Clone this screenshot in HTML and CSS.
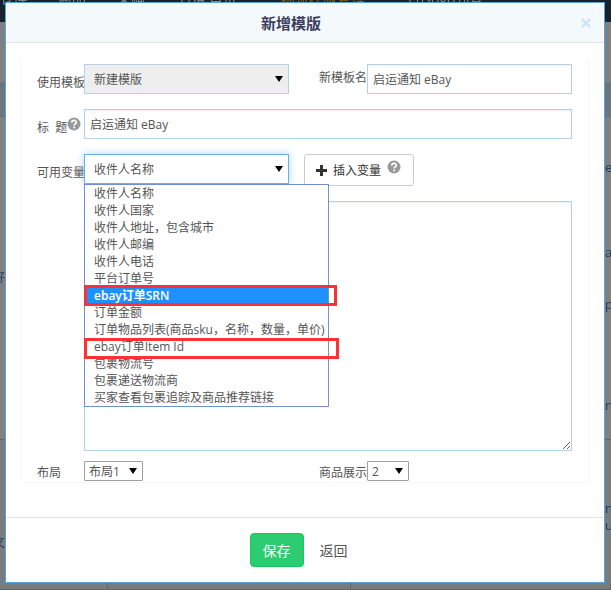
FILE: index.html
```html
<!DOCTYPE html>
<html lang="zh-CN">
<head>
<meta charset="utf-8">
<title>新增模版</title>
<link rel="stylesheet" href="styles.css">
</head>
<body>
<div class="page" aria-hidden="true">
  <nav class="nav"><span>仓库</span><span>商品</span><span>采购</span><span>FBA 自货</span><span class="nav-current">物流模版管理</span><span>Ensogo刊登</span></nav>
  <div class="blank"></div>
  <div class="band"></div>
  <div class="list">
    <span class="side-left">好</span>
    <div class="side-right"><span>e</span><span>at</span><span>p</span><span>n</span></div>
  </div>
  <div class="table-end">
    <span class="side-left">文</span>
    <div class="side-right tight"><span>n</span><span>u</span></div>
    <div class="cells"><i></i><i></i><i></i></div>
  </div>
</div>

<div class="overlay">
  <section class="modal" role="dialog" aria-labelledby="modal-title">
    <header class="modal-header">
      <h1 id="modal-title">新增模版</h1>
      <button class="close" type="button" aria-label="关闭">
        <svg viewBox="0 0 12 12" width="12" height="12"><path d="M2 2 10 10M10 2 2 10" stroke="currentColor" stroke-width="3"/></svg>
      </button>
    </header>
    <form id="template-form" class="modal-body">
      <div class="panel">
        <div class="row">
          <label for="source">使用模板</label>
          <div class="select muted"><select id="source"><option>新建模版</option></select></div>
          <label class="second raised" for="name">新模板名</label>
          <input id="name" type="text" value="启运通知 eBay">
        </div>
        <div class="row">
          <label for="subject">标&nbsp; 题<svg class="help" viewBox="0 0 14 14" width="14" height="14"><circle cx="7" cy="7" r="6.5" fill="#999"/><path d="M4.8 5.4C4.8 2.8 9.3 2.8 9.3 5.3 9.3 7 7.2 6.8 7.2 8.5" fill="none" stroke="#fff" stroke-width="1.7"/><path d="M6.3 9.6h1.8v1.7H6.3z" fill="#fff"/></svg></label>
          <input id="subject" class="wide" type="text" value="启运通知 eBay">
        </div>
        <div class="row variable-row">
          <label for="variable">可用变量</label>
          <div class="select focused">
            <select id="variable"><option>收件人名称</option></select>
            <ul class="menu" role="listbox" aria-label="可用变量">
              <li role="option">收件人名称</li>
              <li role="option">收件人国家</li>
              <li role="option">收件人地址，包含城市</li>
              <li role="option">收件人邮编</li>
              <li role="option">收件人电话</li>
              <li role="option">平台订单号</li>
              <li role="option" class="active" aria-selected="true">ebay订单SRN<i class="mark"></i></li>
              <li role="option">订单金额</li>
              <li role="option">订单物品列表(商品sku，名称，数量，单价)</li>
              <li role="option">ebay订单Item Id<i class="mark mark-low"></i></li>
              <li role="option">包裹物流号</li>
              <li role="option">包裹递送物流商</li>
              <li role="option">买家查看包裹追踪及商品推荐链接</li>
            </ul>
          </div>
          <button class="insert" type="button">
            <svg viewBox="0 0 11 11" width="11" height="11"><path d="M4 0h3v4h4v3H7v4H4V7H0V4h4z" fill="#333"/></svg>
            <span>插入变量</span>
            <svg class="help" viewBox="0 0 14 14" width="14" height="14"><circle cx="7" cy="7" r="6.5" fill="#999"/><path d="M4.8 5.4C4.8 2.8 9.3 2.8 9.3 5.3 9.3 7 7.2 6.8 7.2 8.5" fill="none" stroke="#fff" stroke-width="1.7"/><path d="M6.3 9.6h1.8v1.7H6.3z" fill="#fff"/></svg>
          </button>
        </div>
        <div class="row">
          <textarea class="wide" aria-label="内容"></textarea>
        </div>
        <div class="row small-row">
          <label for="layout">布局</label>
          <div class="select small layout"><select id="layout"><option>布局1</option></select></div>
          <label class="second" for="display">商品展示</label>
          <div class="select small count"><select id="display"><option>2</option></select></div>
        </div>
      </div>
    </form>
    <footer class="modal-footer">
      <button class="save" type="submit" form="template-form">保存</button>
      <button class="back" type="button">返回</button>
    </footer>
  </section>
</div>
</body>
</html>
```
FILE: styles.css
```css
* {
  box-sizing: border-box;
}

body {
  margin: 0;
  font: 12px/17px "Open Sans", "Noto Sans CJK SC", sans-serif;
  color: #555;
  background: #808080;
}

button,
input,
select,
textarea {
  font: inherit;
  color: inherit;
  margin: 0;
}

/* Dimmed page behind the dialog */
.page {
  position: fixed;
  inset: 0;
  display: flex;
  flex-direction: column;
  overflow: hidden;
  color: #273c57;
}

.nav {
  flex: none;
  display: grid;
  grid-template-columns: 58px 59px 63px 101px 127px 1fr;
  height: 32px;
  margin-top: -10px;
  background: #1a222b;
  color: #83878b;
  font-size: 14px;
  line-height: 17px;
  white-space: nowrap;
}

.nav-current {
  color: #8b6508;
}

.blank {
  height: 60px;
  flex: none;
}

.band {
  height: 35px;
  flex: none;
  background: #6b777d;
  border-bottom: 1px solid #707070;
}

.list {
  flex: none;
  height: 322px;
  display: flex;
  justify-content: space-between;
}

.side-left {
  width: 5px;
  padding-top: 152px;
  overflow: hidden;
  direction: rtl;
}

.side-right {
  width: 6px;
  padding-top: 42px;
  display: grid;
  grid-template-rows: 85px 52px 101px 17px;
  overflow: hidden;
  font-size: 13px;
}

.table-end {
  flex: 1;
  display: flex;
  flex-wrap: wrap;
  justify-content: space-between;
  align-content: space-between;
  background: #787c7d;
  border-top: 1px solid #666;
}

.table-end .side-left {
  padding-top: 94px;
}

.tight {
  padding-top: 60px;
  grid-template-rows: 17px 17px;
}

.cells {
  width: 100%;
  height: 7px;
  display: grid;
  grid-template-columns: 108px 243px 1fr;
  border-bottom: 1px solid #666;
}

.cells i {
  border-right: 1px solid #666;
}

/* Dialog */
.overlay {
  position: relative;
  padding: 2px 6px 7px 5px;
}

.modal {
  background: #fff;
  border: 1px solid #59a5d8;
}

.modal-header {
  display: flex;
  align-items: center;
  gap: 4px;
  padding: 0 12px 0 0;
  height: 40px;
  background: #f4f9fc;
  border-bottom: 1px solid #dfe3e8;
}

.modal-header h1 {
  flex: 1;
  margin: 0;
  text-align: center;
  font-size: 15px;
  line-height: 20px;
  font-weight: 700;
  color: #3b3f5c;
}

.close {
  display: flex;
  padding: 0;
  border: 0;
  background: none;
  color: #d3e5ef;
}

.modal-body {
  padding: 14px 15px 34px 14px;
}

.panel {
  display: flex;
  flex-direction: column;
  gap: 15px;
  padding: 7px 16px 1px;
  border: 1px solid #f7f7f7;
  border-top: 0;
  border-radius: 4px;
}

.row {
  display: grid;
  grid-template-columns: 47px 1fr 78px 1fr;
  align-items: start;
}

.row label {
  display: flex;
  padding-top: 10px;
  white-space: nowrap;
}

.row .second {
  padding-left: 30px;
}

.row .raised {
  padding-top: 5px;
}

.wide {
  grid-column: 2 / -1;
}

label .help {
  margin-top: -2px;
}

input,
textarea {
  width: 100%;
  height: 30px;
  padding: 0 5px;
  border: 1px solid #b5d3e7;
  border-radius: 0;
  background: #fff;
  box-shadow: inset 0 1px 2px rgba(0, 0, 0, 0.07);
}

textarea {
  display: block;
  height: 250px;
  resize: both;
}

.select {
  position: relative;
}

.select select {
  display: block;
  width: 100%;
  height: 30px;
  padding: 0 24px 0 9px;
  appearance: none;
  border: 1px solid #b5d3e7;
  border-radius: 0;
  background: #fff;
}

.select::after {
  content: "";
  position: absolute;
  top: calc(50% - 3px);
  right: 6px;
  border: solid transparent;
  border-width: 6px 4px 0;
  border-top-color: #000;
  pointer-events: none;
}

.select.muted select {
  background: #eee;
}

.variable-row {
  height: 32px;
}

.focused {
  height: 30px;
}

.select.focused select {
  border-color: #66afe9;
  box-shadow: 0 0 8px rgba(102, 175, 233, 0.5);
}

.insert {
  grid-column: 3 / -1;
  justify-self: start;
  display: flex;
  align-items: center;
  gap: 6px;
  height: 32px;
  margin-left: 15px;
  padding: 0 12px 0 11px;
  border: 1px solid #ccc;
  border-radius: 3px;
  background: #fff;
  color: #333;
}

.insert .help {
  margin-bottom: 6px;
}

.menu {
  position: absolute;
  z-index: 2;
  top: 100%;
  left: 0;
  width: 245px;
  margin: 0;
  padding: 0;
  list-style: none;
  border: 1px solid #6f91cf;
  background: #fff;
}

.menu li {
  position: relative;
  height: 17px;
  padding-left: 9px;
  white-space: nowrap;
}

.menu .active {
  background: #1e90ff;
  color: #fff;
  font-weight: 600;
}

.mark {
  position: absolute;
  z-index: 1;
  top: -2px;
  left: -1px;
  right: -9px;
  height: 21px;
  border: 3px solid #fa3236;
}

.mark-low {
  top: 0;
  right: -11px;
}

.small-row {
  margin-top: -5px;
}

.small-row label,
.small-row .second {
  padding-top: 3px;
}

.select.small select {
  height: 20px;
  padding: 0 20px 0 4px;
  border-color: #a0a0a0;
  border-radius: 1px;
}

.layout {
  width: 59px;
}

.count {
  width: 42px;
}

.modal-footer {
  display: flex;
  justify-content: center;
  align-items: center;
  gap: 16px;
  padding: 15px 13px 15px 0;
  border-top: 1px solid #e3e3e3;
  font-size: 14px;
}

.save {
  width: 54px;
  height: 34px;
  padding: 0;
  border: 1px solid #16c75c;
  border-radius: 4px;
  background: #2ecc71;
  color: #fff;
}

.back {
  padding: 0;
  border: 0;
  background: none;
}
```
